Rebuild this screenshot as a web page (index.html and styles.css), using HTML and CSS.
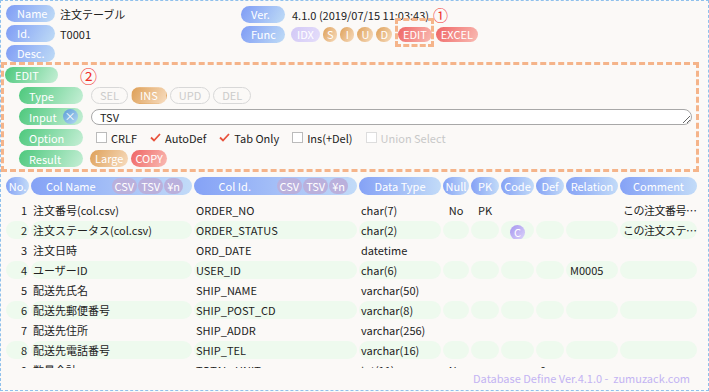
FILE: index.html
```html
<!DOCTYPE html>
<html lang="ja">
<head>
  <meta charset="UTF-8">
  <title>Database Define</title>
  <link rel="stylesheet" href="styles.css">
</head>
<body>
  <div class="page">
    <div class="head">
      <div class="head-col head-left">
        <div class="hrow"><span class="tag blue">Name</span><span class="val">注文テーブル</span></div>
        <div class="hrow"><span class="tag blue">Id.</span><span class="val">T0001</span></div>
        <div class="hrow"><span class="tag blue">Desc.</span></div>
      </div>
      <div class="head-col head-right">
        <div class="hrow"><span class="tag blue">Ver.</span><span class="val ver">4.1.0 (2019/07/15 11:03:43)</span><span class="mark">①</span></div>
        <div class="hrow">
          <span class="tag blue">Func</span>
          <span class="fn lilac first">IDX</span>
          <span class="fn orange">S</span>
          <span class="fn orange">I</span>
          <span class="fn orange">U</span>
          <span class="fn orange">D</span>
          <span class="fn red marked">EDIT</span>
          <span class="fn red">EXCEL</span>
        </div>
      </div>
    </div>

    <div class="edit">
      <div class="edit-title">
        <span class="tag green edit-tag">EDIT</span>
        <span class="mark mark2">②</span>
      </div>
      <div class="erow">
        <span class="elbl green">Type</span>
        <span class="tbtn">SEL</span>
        <span class="tbtn on orange">INS</span>
        <span class="tbtn">UPD</span>
        <span class="tbtn">DEL</span>
      </div>
      <div class="erow">
        <span class="elbl green">Input<span class="xbtn">×</span></span>
        <textarea class="input" rows="1">TSV</textarea>
      </div>
      <div class="erow">
        <span class="elbl green">Option</span>
        <span class="opt first"><span class="box"></span>CRLF</span>
        <span class="opt"><svg class="chk" width="11" height="11" viewBox="0 0 11 11"><polyline points="1,5.5 4,8.5 10,2" fill="none" stroke="#e8523c" stroke-width="1.8"/></svg>AutoDef</span>
        <span class="opt"><svg class="chk" width="11" height="11" viewBox="0 0 11 11"><polyline points="1,5.5 4,8.5 10,2" fill="none" stroke="#e8523c" stroke-width="1.8"/></svg>Tab Only</span>
        <span class="opt"><span class="box"></span>Ins(+Del)</span>
        <span class="opt off"><span class="box"></span>Union Select</span>
      </div>
      <div class="erow">
        <span class="elbl green">Result</span>
        <span class="rbtn orange">Large</span>
        <span class="rbtn red">COPY</span>
      </div>
    </div>

    <div class="tbl">
      <div class="tr thead">
        <div class="th">No.</div>
        <div class="th split"><span class="th-name">Col Name</span><span class="sub">CSV</span><span class="sub">TSV</span><span class="sub">¥n</span></div>
        <div class="th split"><span class="th-name">Col Id.</span><span class="sub">CSV</span><span class="sub">TSV</span><span class="sub">¥n</span></div>
        <div class="th">Data Type</div>
        <div class="th">Null</div>
        <div class="th">PK</div>
        <div class="th">Code</div>
        <div class="th">Def</div>
        <div class="th">Relation</div>
        <div class="th">Comment</div>
      </div>

      <div class="tr">
        <div class="td num">1</div><div class="td">注文番号(col.csv)</div><div class="td">ORDER_NO</div><div class="td">char(7)</div>
        <div class="td mid">No</div><div class="td mid">PK</div><div class="td"></div><div class="td"></div><div class="td"></div>
        <div class="td cmt">この注文番号…</div>
      </div>
      <div class="tr alt">
        <div class="td num">2</div><div class="td">注文ステータス(col.csv)</div><div class="td">ORDER_STATUS</div><div class="td">char(2)</div>
        <div class="td"></div><div class="td"></div><div class="td mid"><span class="code">C</span></div><div class="td"></div><div class="td"></div>
        <div class="td cmt">この注文ステ…</div>
      </div>
      <div class="tr">
        <div class="td num">3</div><div class="td">注文日時</div><div class="td">ORD_DATE</div><div class="td">datetime</div>
        <div class="td"></div><div class="td"></div><div class="td"></div><div class="td"></div><div class="td"></div><div class="td"></div>
      </div>
      <div class="tr alt">
        <div class="td num">4</div><div class="td">ユーザーID</div><div class="td">USER_ID</div><div class="td">char(6)</div>
        <div class="td"></div><div class="td"></div><div class="td"></div><div class="td"></div><div class="td rel">M0005</div><div class="td"></div>
      </div>
      <div class="tr">
        <div class="td num">5</div><div class="td">配送先氏名</div><div class="td">SHIP_NAME</div><div class="td">varchar(50)</div>
        <div class="td"></div><div class="td"></div><div class="td"></div><div class="td"></div><div class="td"></div><div class="td"></div>
      </div>
      <div class="tr alt">
        <div class="td num">6</div><div class="td">配送先郵便番号</div><div class="td">SHIP_POST_CD</div><div class="td">varchar(8)</div>
        <div class="td"></div><div class="td"></div><div class="td"></div><div class="td"></div><div class="td"></div><div class="td"></div>
      </div>
      <div class="tr">
        <div class="td num">7</div><div class="td">配送先住所</div><div class="td">SHIP_ADDR</div><div class="td">varchar(256)</div>
        <div class="td"></div><div class="td"></div><div class="td"></div><div class="td"></div><div class="td"></div><div class="td"></div>
      </div>
      <div class="tr alt">
        <div class="td num">8</div><div class="td">配送先電話番号</div><div class="td">SHIP_TEL</div><div class="td">varchar(16)</div>
        <div class="td"></div><div class="td"></div><div class="td"></div><div class="td"></div><div class="td"></div><div class="td"></div>
      </div>
      <div class="tr">
        <div class="td num">9</div><div class="td">数量合計</div><div class="td">TOTAL_UNIT</div><div class="td">int(11)</div>
        <div class="td mid">No</div><div class="td"></div><div class="td"></div><div class="td rel">0</div><div class="td"></div><div class="td"></div>
      </div>
    </div>

    <div class="foot">Database Define Ver.4.1.0 -&nbsp; zumuzack.com</div>
  </div>
</body>
</html>
```

FILE: styles.css
```css
* {
  box-sizing: border-box;
}
body {
  margin: 0;
  background-color: #fbf9f7;
  font-family: "Noto Sans CJK JP", "Noto Sans", sans-serif;
  font-size: 11px;
  color: #222;
}
.page {
  width: 709px;
  height: 391px;
  border: 1px dashed #8fc0ec;
  display: flex;
  flex-direction: column;
  overflow: hidden;
}

/* colours */
.blue {
  background: linear-gradient(120deg, #7f9cf5, #bfdcf6);
}
.green {
  background: linear-gradient(120deg, #4cc87c, #c6efd6);
}
.orange {
  background: linear-gradient(120deg, #dea058, #f7dcbf);
}
.red {
  background: linear-gradient(120deg, #ef6464, #f9bcb4);
}
.lilac {
  background: linear-gradient(120deg, #d2c8f6, #e4ddfa);
}

/* header */
.head {
  display: flex;
  height: 61px;
  padding: 4px 0 0 5px;
}
.head-col {
  display: flex;
  flex-direction: column;
  gap: 3px;
}
.head-left {
  width: 235px;
}
.head-right {
  padding-top: 1px;
}
.hrow {
  display: flex;
  align-items: center;
  height: 17px;
}
.tag {
  height: 17px;
  line-height: 17px;
  border-radius: 9px;
  color: #fff;
  padding-left: 11px;
  flex-shrink: 0;
}
.head-left .tag {
  width: 49px;
}
.head-right .tag {
  width: 44px;
  padding-left: 10px;
}
.val {
  margin-left: 5px;
}
.val.ver {
  margin-left: 7px;
}
.mark {
  color: #f0302c;
  font-size: 15px;
  line-height: 15px;
  margin-left: 4px;
}
.fn {
  height: 15px;
  line-height: 15px;
  min-width: 14px;
  padding: 0 5px;
  border-radius: 8px;
  color: #fff;
  text-align: center;
  margin-left: 3px;
}
.fn.first {
  margin-left: 6px;
  padding: 0 6px;
}
.fn.orange {
  padding: 0 4px;
}
.fn.marked {
  position: relative;
  margin-left: 6px;
  margin-right: 1px;
}
.fn.marked::after {
  content: "";
  position: absolute;
  top: -9px;
  bottom: -5px;
  left: -3px;
  right: -2px;
  border: 3px dashed #f5b48a;
}

/* edit box */
.edit {
  height: 110px;
  margin-right: 9px;
  border: 3px dashed #f5b48a;
  padding: 2px 0 0 1px;
}
.edit-title {
  display: flex;
  align-items: flex-start;
  height: 18px;
}
.edit-tag {
  width: 53px;
  height: 16px;
  line-height: 16px;
  padding-left: 10px;
}
.mark2 {
  font-size: 17px;
  line-height: 17px;
  margin-left: 22px;
}
.erow {
  display: flex;
  align-items: center;
  height: 21px;
  padding-left: 14px;
}
.elbl {
  display: flex;
  align-items: center;
  width: 64px;
  height: 17px;
  border-radius: 9px;
  padding-left: 10px;
  margin-right: 8px;
  color: #fff;
  flex-shrink: 0;
}
.xbtn {
  display: flex;
  align-items: center;
  justify-content: center;
  width: 15px;
  height: 15px;
  margin-left: 6px;
  border-radius: 50%;
  background: linear-gradient(135deg, #5c9cd6, #b2d8f2);
  color: #fff;
  font-size: 11px;
  line-height: 15px;
}
.tbtn {
  height: 17px;
  line-height: 15px;
  padding: 0 8px;
  margin-right: 3px;
  border: 1px solid #d8d8d8;
  border-radius: 9px;
  color: #cbcbcb;
}
.tbtn.on {
  border-color: transparent;
  color: #fff;
}
.input {
  width: 601px;
  height: 16px;
  margin: 1px 0 0;
  padding: 0 8px;
  border: 1px solid #a8a8a8;
  border-radius: 8px;
  background: #fff;
  font-family: inherit;
  font-size: 11px;
  line-height: 14px;
  color: #222;
  resize: vertical;
  overflow: hidden;
}
.opt {
  display: flex;
  align-items: center;
  margin-right: 13px;
}
.opt.first {
  margin-left: 5px;
}
.opt.off {
  color: #c8c8c8;
}
.box {
  width: 11px;
  height: 11px;
  margin-right: 4px;
  border: 1px solid #bbb;
  background: #fff;
}
.opt.off .box {
  border-color: #ddd;
}
.chk {
  margin-right: 4px;
}
.rbtn {
  height: 17px;
  line-height: 17px;
  padding: 0 5px;
  margin-right: 3px;
  border-radius: 9px;
  color: #fff;
}
.rbtn.orange {
  margin-left: -1px;
}
.rbtn.red {
  padding: 0 4px;
}

/* table */
.tbl {
  height: 191px;
  margin-top: 5px;
  padding-left: 5px;
  overflow: hidden;
}
.tr {
  display: grid;
  grid-template-columns: 23px 161px 163px 82px 26px 28px 33px 28px 52px 77px;
  column-gap: 2px;
  height: 18px;
  margin-bottom: 2px;
  line-height: 18px;
}
.tr.thead {
  margin-bottom: 6px;
}
.th {
  display: flex;
  align-items: center;
  justify-content: center;
  border-radius: 9px;
  background: linear-gradient(to right, #85a2f6, #c2dbf8);
  color: #fff;
  white-space: nowrap;
}
.th.split {
  padding-right: 9px;
}
.th-name {
  flex: 1;
  text-align: center;
}
.sub {
  height: 16px;
  line-height: 16px;
  padding: 0 3px;
  margin-left: 1px;
  border-radius: 8px;
  background: #bab0dc;
}
.td {
  border-radius: 9px;
  padding: 0 2px;
  white-space: nowrap;
  overflow: hidden;
  text-overflow: ellipsis;
}
.tr.alt .td {
  background: #eefaee;
}
.td.num {
  text-align: right;
}
.td.mid {
  text-align: center;
}
.td.rel {
  padding-left: 4px;
}
.td.cmt {
  padding-left: 3px;
  letter-spacing: -0.5px;
  text-overflow: clip;
}
.code {
  display: inline-block;
  width: 15px;
  height: 15px;
  line-height: 15px;
  border-radius: 50%;
  background: linear-gradient(135deg, #a595ef, #ddd5fa);
  color: #fff;
  text-align: center;
  vertical-align: middle;
}

.foot {
  margin-top: 2px;
  padding-right: 18px;
  text-align: right;
  color: #c3b4f3;
  font-size: 11px;
  line-height: 16px;
}
```
